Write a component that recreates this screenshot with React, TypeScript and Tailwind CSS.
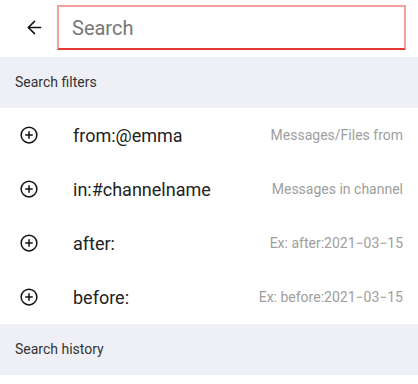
import { ArrowLeft } from "lucide-react";

const filters = [
  { label: "from:@emma", hint: "Messages/Files from" },
  { label: "in:#channelname", hint: "Messages in channel" },
  { label: "after:", hint: "Ex: after:2021\u221203\u221215" },
  { label: "before:", hint: "Ex: before:2021\u221203\u221215" },
];

const PlusCircle = () => (
  <svg width="18" height="18" viewBox="0 0 24 24" fill="none" stroke="#111" strokeWidth="2">
    <circle cx="12" cy="12" r="10.5" />
    <path d="M12 7v10M7 12h10" />
  </svg>
);

const SectionTitle = ({ title }: { title: string }) => (
  <div className="h-[51px] bg-[#eff0f5] flex items-center pl-[15px] text-[14px] text-[#333]">
    {title}
  </div>
);

const FilterRow = ({ label, hint }: { label: string; hint: string }) => (
  <div className="h-[54px] flex items-center pl-[20px] pr-[15px]">
    <PlusCircle />
    <span className="ml-[35px] text-[18px] text-[#222]">{label}</span>
    <span className="ml-auto text-[14px] text-[#9e9e9e]">{hint}</span>
  </div>
);

export default function App() {
  return (
    <div className="w-[418px] h-[384px] bg-white overflow-hidden" style={{ fontFamily: "Roboto, sans-serif" }}>
      <div className="h-[57px] flex items-start pt-[5px]">
        <div className="w-[57px] h-[45px] flex items-center justify-end pr-[12px]">
          <ArrowLeft size={21} strokeWidth={1.8} color="#111" />
        </div>
        <div className="w-[349px] h-[45px] border-2 border-[#f3a0a0] border-b-[#e53935] flex items-center pl-[13px]">
          <span className="text-[20px] text-[#777]">Search</span>
        </div>
      </div>
      <SectionTitle title="Search filters" />
      {filters.map((f) => (
        <FilterRow key={f.label} label={f.label} hint={f.hint} />
      ))}
      <SectionTitle title="Search history" />
    </div>
  );
}
